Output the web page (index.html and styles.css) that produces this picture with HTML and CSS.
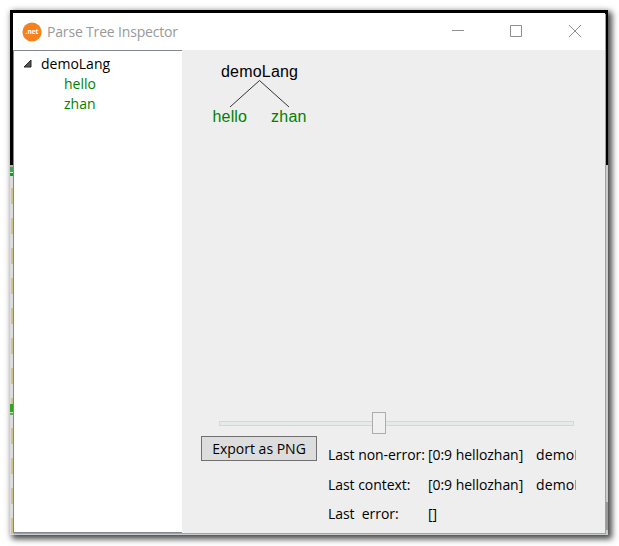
FILE: index.html
```html
<!DOCTYPE html>
<html lang="en">
<head>
<meta charset="utf-8">
<title>Parse Tree Inspector</title>
<link rel="stylesheet" href="styles.css">
</head>
<body>
<div class="frame">
  <div class="edge">
    <i class="leaf"></i><i class="leaf leaf-low"></i>
  </div>
  <div class="window">
    <header class="titlebar">
      <svg class="logo" width="20" height="20" viewBox="0 0 20 20"><circle cx="10" cy="10" r="9.6" fill="#f5821f"/><text x="10" y="12" text-anchor="middle" textLength="13" lengthAdjust="spacingAndGlyphs">.net</text></svg>
      <h1 class="title">Parse Tree Inspector</h1>
      <svg class="controls" width="132" height="14" viewBox="0 0 132 14" fill="none" stroke="#8f8f8f"><path d="M1 6.500h12M59.500 1.500h11v11h-11zM118 1l12 12M130 1l-12 12"/></svg>
    </header>
    <div class="body">
      <nav class="sidebar">
        <div class="root"><svg width="9" height="9" viewBox="0 0 9 9"><path d="M8 1v7H1z" fill="#555" stroke="#262626"/></svg><span>demoLang</span></div>
        <div class="child">hello</div>
        <div class="child">zhan</div>
      </nav>
      <main class="content">
        <svg class="tree" width="140" height="80" viewBox="0 0 140 80">
          <path d="M77.500 30.500L48 57M77.500 30.500L107 57" stroke="#333" fill="none"/>
          <text x="39" y="27" textLength="77">demoLang</text>
          <text class="token" x="30.500" y="72" textLength="34.500">hello</text>
          <text class="token" x="89" y="72" textLength="35.500">zhan</text>
        </svg>
        <div class="slider"><div class="track"></div><div class="thumb"></div></div>
        <div class="bottom">
          <button class="export">Export as PNG</button>
          <div class="status">
            <span class="name">Last non-error:</span><span>[0:9 hellozhan]</span><span class="rule">demoLang</span>
            <span class="name">Last context:</span><span>[0:9 hellozhan]</span><span class="rule">demoLang</span>
            <span class="name">Last&nbsp; error:</span><span>[]</span>
          </div>
        </div>
      </main>
    </div>
  </div>
</div>
</body>
</html>
```
FILE: styles.css
```css
* { box-sizing: border-box; }
body {
  margin: 0;
  padding: 10px;
  width: 619px;
  height: 546px;
  overflow: hidden;
  background: #fff;
  font: 14px/20px "Open Sans", "Noto Sans", sans-serif;
  color: #000;
}
.frame {
  position: relative;
  width: 598px;
  height: 525px;
  padding: 3px 3px 2px;
  background:
    linear-gradient(#96999b, #96999b) right 0 top 492px / 3px 28px no-repeat,
    linear-gradient(#000 155px, #c9cccd 155px);
  box-shadow: 3px 3px 6px 1px rgba(0, 0, 0, .7), 0 0 7px rgba(0, 0, 0, .12);
}
.edge {
  position: absolute;
  left: 0;
  top: 155px;
  width: 3px;
  height: 370px;
  background:
    linear-gradient(transparent 14px, #d3c38b 14px) 1px 9px / 2px 30px repeat-y,
    #dcdcdc;
}
.leaf {
  position: absolute;
  left: 0;
  top: 0;
  width: 3px;
  height: 11px;
  background: linear-gradient(#b8b0a0 2px, #4f9d55 2px, #3eaa48 7px, #d5efd5 7px 8px, #199a30 8px);
}
.leaf-low {
  top: 239px;
  height: 11px;
  background: linear-gradient(#35a51f 8px, #c5dfbc 8px 9px, #65a75c 9px);
}
.window {
  position: relative;
  height: 520px;
  display: flex;
  flex-direction: column;
  background: #eee;
  box-shadow: 1px 1px 0 #a0a2a5;
}
.titlebar {
  height: 37px;
  display: flex;
  align-items: center;
  padding: 0 22px 0 9px;
  background: #fff;
}
.controls { margin-top: -2px; }
.logo text { font: bold 7px "Open Sans", sans-serif; fill: #fff; }
.title {
  margin: 0 0 0 5px;
  flex: 1;
  font-size: 14px;
  font-weight: 400;
  color: #999;
  letter-spacing: -.17px;
}
.body { flex: 1; display: flex; min-height: 0; }
.sidebar {
  width: 169px;
  padding: 3px 0 0 9px;
  background: #fff;
  border: solid #828790;
  border-width: 1px 0 1px 1px;
}
.root { display: flex; align-items: center; }
.root svg { margin-bottom: 2px; }
.root span { margin-left: 9px; }
.child { padding-left: 41px; color: #008000; }
.content {
  flex: 1;
  min-width: 0;
  display: flex;
  flex-direction: column;
}
.tree { margin-bottom: 282px; font: 16px "Liberation Sans", Arial, sans-serif; }
.tree .token { fill: #008000; }
.slider {
  width: 355px;
  height: 22px;
  margin-left: 37px;
  display: grid;
  align-items: center;
}
.slider > * { grid-area: 1 / 1; }
.track { height: 5px; background: #e7eaea; border: 1px solid #d6d6d6; }
.thumb {
  width: 14px;
  height: 22px;
  margin-left: 153px;
  background: #f0f0f0;
  border: 1px solid #acacac;
}
.bottom { display: flex; align-items: flex-start; margin: 2px 0 0 19px; }
.export {
  width: 116px;
  height: 25px;
  padding: 0;
  font: inherit;
  color: #000;
  background: #ddd;
  border: 1px solid #707070;
  white-space: nowrap;
}
.status {
  display: grid;
  grid-template-columns: 100px 108px 40px;
  grid-template-rows: 30px 29px 20px;
  margin: 9px 0 0 11px;
  white-space: nowrap;
  letter-spacing: -.05px;
}
.rule { width: 40px; overflow: hidden; letter-spacing: .1px; }
```
